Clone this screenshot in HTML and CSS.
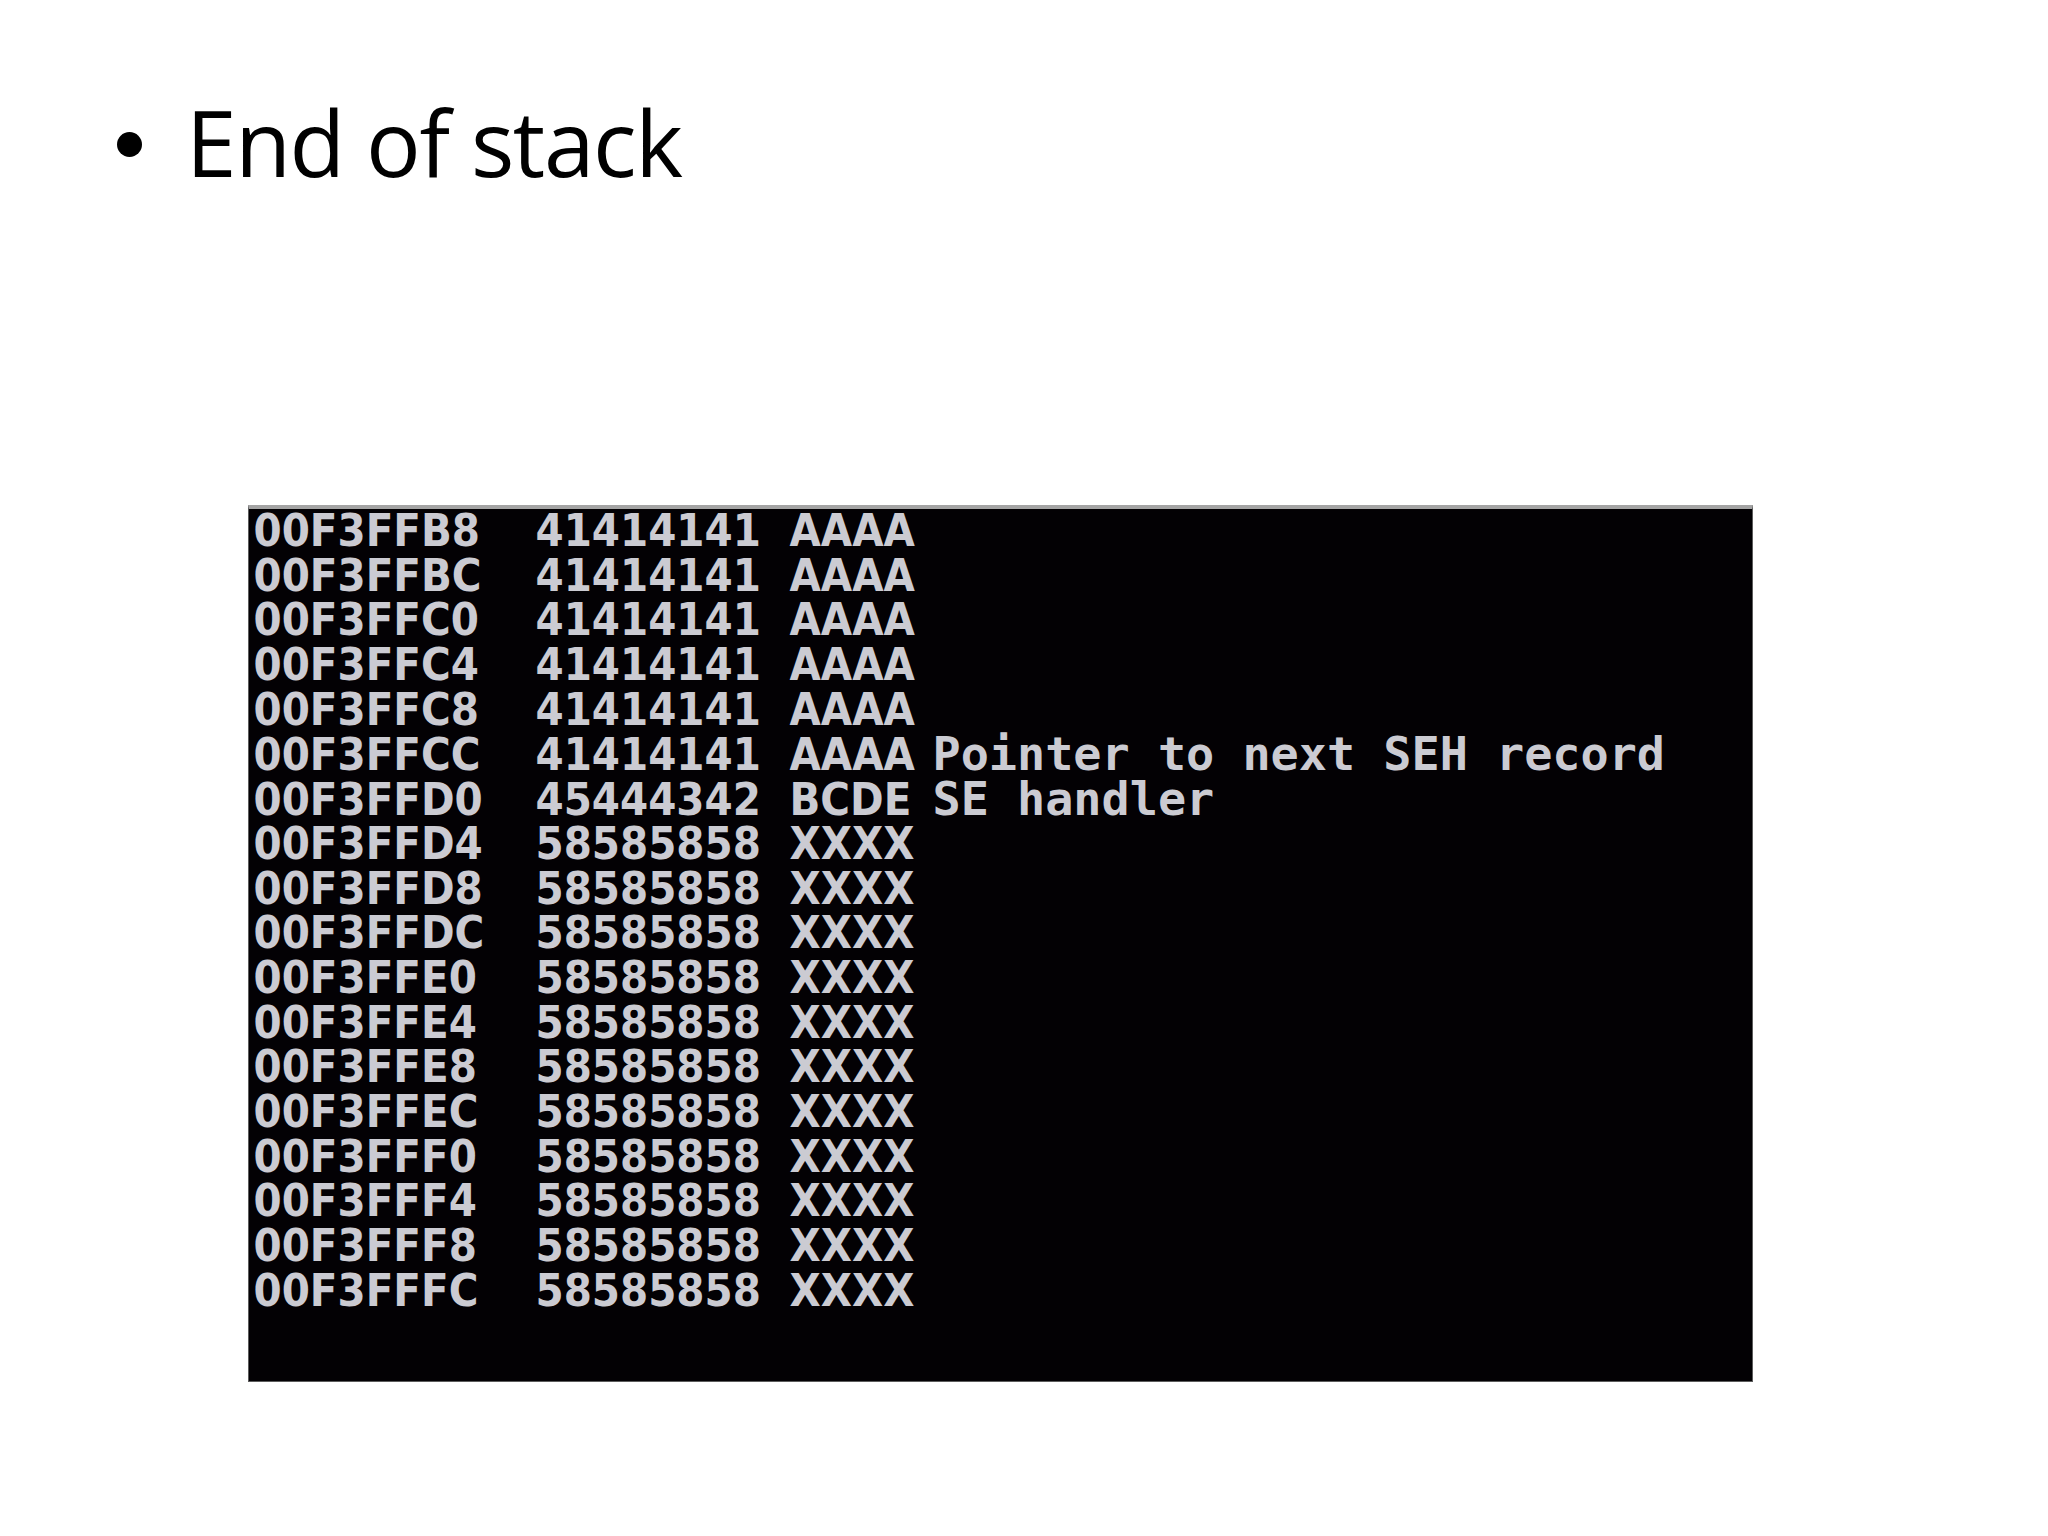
FILE: index.html
```html
<!DOCTYPE html>
<html lang="en">
<head>
<meta charset="utf-8">
<title>End of stack</title>
<link rel="stylesheet" href="styles.css">
</head>
<body>
<div class="slide">
  <div class="title">
    <span class="bullet"></span>
    <span class="title-text">End of stack</span>
  </div>
  <div class="screen">
    <div class="row"><span class="addr">00F3FFB8</span><span class="hex">41414141</span><span class="asc">AAAA</span></div>
    <div class="row"><span class="addr">00F3FFBC</span><span class="hex">41414141</span><span class="asc">AAAA</span></div>
    <div class="row"><span class="addr">00F3FFC0</span><span class="hex">41414141</span><span class="asc">AAAA</span></div>
    <div class="row"><span class="addr">00F3FFC4</span><span class="hex">41414141</span><span class="asc">AAAA</span></div>
    <div class="row"><span class="addr">00F3FFC8</span><span class="hex">41414141</span><span class="asc">AAAA</span></div>
    <div class="row"><span class="addr">00F3FFCC</span><span class="hex">41414141</span><span class="asc">AAAA</span><span class="cmt">Pointer to next SEH record</span></div>
    <div class="row"><span class="addr">00F3FFD0</span><span class="hex">45444342</span><span class="asc">BCDE</span><span class="cmt">SE handler</span></div>
    <div class="row"><span class="addr">00F3FFD4</span><span class="hex">58585858</span><span class="asc">XXXX</span></div>
    <div class="row"><span class="addr">00F3FFD8</span><span class="hex">58585858</span><span class="asc">XXXX</span></div>
    <div class="row"><span class="addr">00F3FFDC</span><span class="hex">58585858</span><span class="asc">XXXX</span></div>
    <div class="row"><span class="addr">00F3FFE0</span><span class="hex">58585858</span><span class="asc">XXXX</span></div>
    <div class="row"><span class="addr">00F3FFE4</span><span class="hex">58585858</span><span class="asc">XXXX</span></div>
    <div class="row"><span class="addr">00F3FFE8</span><span class="hex">58585858</span><span class="asc">XXXX</span></div>
    <div class="row"><span class="addr">00F3FFEC</span><span class="hex">58585858</span><span class="asc">XXXX</span></div>
    <div class="row"><span class="addr">00F3FFF0</span><span class="hex">58585858</span><span class="asc">XXXX</span></div>
    <div class="row"><span class="addr">00F3FFF4</span><span class="hex">58585858</span><span class="asc">XXXX</span></div>
    <div class="row"><span class="addr">00F3FFF8</span><span class="hex">58585858</span><span class="asc">XXXX</span></div>
    <div class="row"><span class="addr">00F3FFFC</span><span class="hex">58585858</span><span class="asc">XXXX</span></div>
  </div>
</div>
</body>
</html>
```
FILE: styles.css
```css
html, body {
  margin: 0;
  padding: 0;
  background: #ffffff;
}

.slide {
  width: 2048px;
  height: 1536px;
  overflow: hidden;
  box-sizing: border-box;
  padding-top: 80px;
}

.title {
  display: flex;
  align-items: flex-start;
  height: 124px;
  font-family: "Open Sans", "DejaVu Sans", sans-serif;
  font-size: 91px;
  line-height: 124px;
  color: #000;
}

.bullet {
  display: block;
  width: 25px;
  height: 25px;
  border-radius: 50%;
  background: #000;
  margin: 52px 0 0 117px;
}

.title-text {
  display: inline-block;
  margin-left: 44px;
  letter-spacing: -1.4px;
  white-space: nowrap;
}

.screen {
  box-sizing: border-box;
  width: 1505px;
  height: 877px;
  margin: 301px 0 0 248px;
  background: #030104;
  border: 1px solid #5c5c5c;
  border-top: 4px solid #a4a4a4;
  padding: 0 0 0 4.5px;
  color: #cbcbd2;
}

.row {
  display: flex;
  align-items: baseline;
  height: 44.7px;
}

.addr,
.hex,
.asc {
  display: inline-block;
  line-height: 44.7px;
  white-space: pre;
  font-family: "DejaVu Sans Condensed", "DejaVu Sans", sans-serif;
  font-stretch: condensed;
  font-size: 45px;
  font-weight: bold;
}

.addr {
  width: 282px;
}

.hex {
  width: 254px;
}

.asc {
  width: 143px;
}

.cmt {
  display: inline-block;
  line-height: 44.7px;
  white-space: pre;
  font-family: "DejaVu Sans Mono", monospace;
  font-size: 46.8px;
  font-weight: bold;
}
```
